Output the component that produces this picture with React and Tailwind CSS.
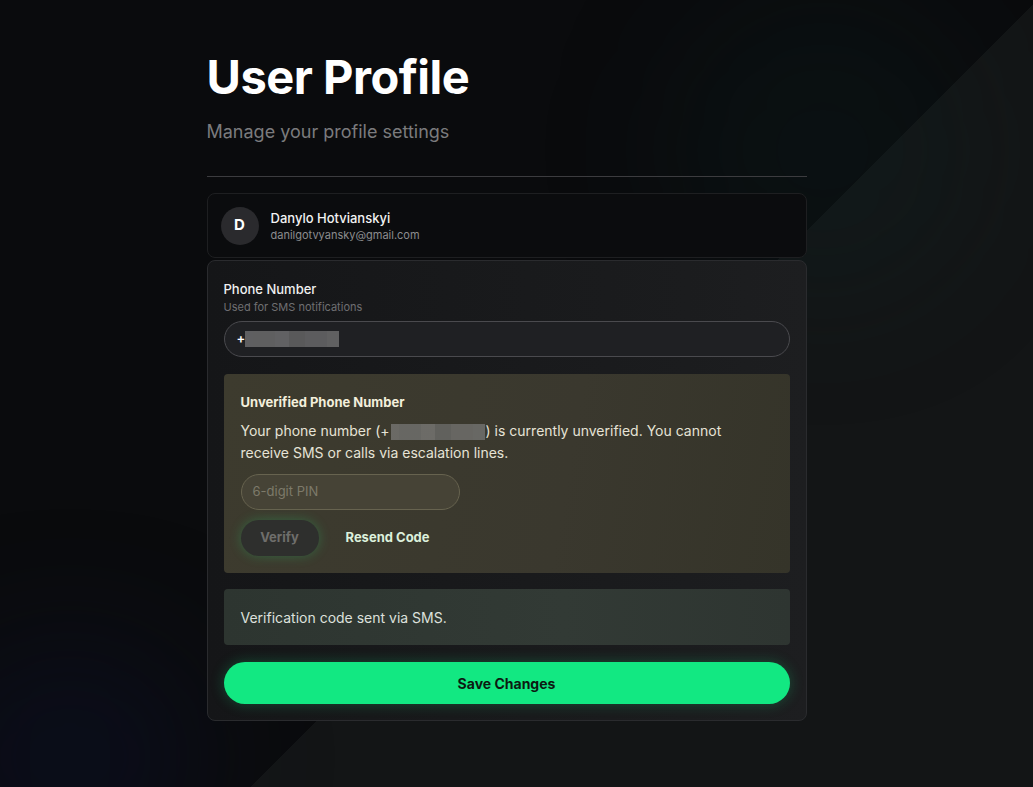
import React from "react";

// blurred mosaic used to hide the phone digits
const Masked = ({ className = "" }) => (
  <span className={`inline-flex h-[16px] align-middle ${className}`}>
    <span className="w-[8px] bg-[#8a8a8a]/60" />
    <span className="w-[22px] bg-[#7a7a7a]/70" />
    <span className="w-[14px] bg-[#8d8d8d]/60" />
    <span className="w-[16px] bg-[#727272]/70" />
    <span className="w-[22px] bg-[#868686]/60" />
    <span className="w-[12px] bg-[#7c7c7c]/70" />
  </span>
);

export default function App() {
  return (
    <div
      className="relative flex min-h-screen h-[787px] justify-center overflow-hidden bg-[linear-gradient(135deg,#0a0b0d_57%,#131516_57%)] pr-[20px] text-white"
      style={{ fontFamily: "Inter, 'Noto Sans', sans-serif" }}
    >
      <div className="pointer-events-none absolute right-[60px] top-[0px] h-[300px] w-[300px] rounded-full bg-[#0c2a2a]/20 blur-3xl" />
      <div className="pointer-events-none absolute bottom-[-80px] left-[-60px] h-[220px] w-[260px] rounded-full bg-[#0c1230]/40 blur-3xl" />

      <div className="relative w-[600px] pt-[50px]">
        <h1 className="text-[47px] font-bold leading-[54px] tracking-[-0.5px] text-white">
          User Profile
        </h1>
        <p className="mt-[16px] text-[18px] leading-[24px] text-[#7b7b7d]">
          Manage your profile settings
        </p>
        <div className="mt-[32px] h-px bg-[#3c3c3f]" />

        {/* account summary */}
        <div className="mt-[16px] flex h-[65px] items-center gap-[12px] rounded-lg border border-[#1e1f21] bg-[#0b0c0e] px-[13px]">
          <div className="flex h-[38px] w-[38px] items-center justify-center rounded-full bg-[#2a2a2d] text-[15px] font-bold text-white">
            D
          </div>
          <div className="flex flex-col">
            <span className="text-[13px] font-medium leading-[18px] text-[#f2f2f2]">
              Danylo Hotvianskyi
            </span>
            <span className="mt-[1px] text-[11px] leading-[15px] text-[#8c8c8f]">
              danilgotvyansky@gmail.com
            </span>
          </div>
        </div>

        {/* form card */}
        <div className="mt-[2px] rounded-lg border border-[#2a2b2e] bg-[linear-gradient(90deg,#151618,#1b1c1e_80%,#1d1e20)] px-[16px] pb-[16px] pt-[19px]">
          <div className="text-[13px] font-medium leading-[18px] text-[#f0f0f0]">
            Phone Number
          </div>
          <div className="mt-[2px] text-[11px] leading-[15px] text-[#6f6f72]">
            Used for SMS notifications
          </div>
          <div className="mt-[6px] flex h-[36px] items-center rounded-full border border-[#4a4a4e] bg-[#1f2023] px-[12px] text-[13px] text-white">
            <span className="font-semibold">+</span>
            <Masked />
          </div>

          {/* unverified notice */}
          <div className="mt-[17px] rounded bg-[linear-gradient(100deg,#3d3b2e,#3a382e_60%,#353429)] px-[17px] pb-[17px] pt-[19px]">
            <div className="text-[13px] font-bold leading-[18px] text-[#f3efdc]">
              Unverified Phone Number
            </div>
            <p className="mt-[9px] text-[14px] leading-[22px] text-[#e6e3d6]">
              Your phone number (+
              <Masked className="mx-[1px]" />
              ) is currently unverified. You cannot
              <br />
              receive SMS or calls via escalation lines.
            </p>
            <div className="mt-[10px] flex h-[36px] w-[219px] items-center rounded-full border border-[#67634f] bg-[#464336] px-[11px] text-[13px] text-[#7d7a6a]">
              6-digit PIN
            </div>
            <div className="mt-[10px] flex items-center gap-[27px]">
              <button className="h-[36px] w-[78px] rounded-full bg-[#2e2f2d] text-[13px] font-bold text-[#6e6e6b] shadow-[0_0_12px_rgba(40,200,110,0.3)]">
                Verify
              </button>
              <button className="text-[13px] font-bold text-[#dcf0dc]">
                Resend Code
              </button>
            </div>
          </div>

          {/* status message */}
          <div className="mt-[16px] flex h-[56px] items-center rounded bg-[linear-gradient(90deg,#2d3530,#323a35_60%,#2e3531)] px-[17px] text-[14px] text-[#dde0dc]">
            Verification code sent via SMS.
          </div>

          <button className="mt-[17px] h-[42px] w-full rounded-full bg-[#12e882] text-[14px] font-bold text-[#0c1a12] shadow-[0_0_14px_rgba(18,232,130,0.25)]">
            Save Changes
          </button>
        </div>
      </div>
    </div>
  );
}
